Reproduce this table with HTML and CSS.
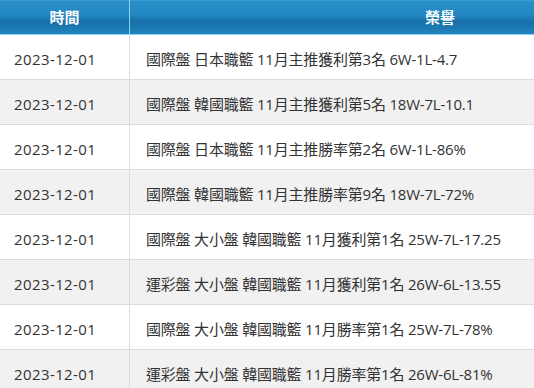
FILE: index.html
```html
<!DOCTYPE html>
<html lang="zh-Hant">
<head>
<meta charset="utf-8">
<link rel="stylesheet" href="styles.css">
</head>
<body>
<div class="wrap">
<table class="honor">
<thead>
<tr><th class="c-date">時間</th><th class="c-honor">榮譽</th></tr>
</thead>
<tbody>
<tr><td class="c-date">2023-12-01</td><td class="c-honor">國際盤 日本職籃 11月主推獲利第3名 6W-1L-4.7</td></tr>
<tr><td class="c-date">2023-12-01</td><td class="c-honor">國際盤 韓國職籃 11月主推獲利第5名 18W-7L-10.1</td></tr>
<tr><td class="c-date">2023-12-01</td><td class="c-honor">國際盤 日本職籃 11月主推勝率第2名 6W-1L-86%</td></tr>
<tr><td class="c-date">2023-12-01</td><td class="c-honor">國際盤 韓國職籃 11月主推勝率第9名 18W-7L-72%</td></tr>
<tr><td class="c-date">2023-12-01</td><td class="c-honor">國際盤 大小盤 韓國職籃 11月獲利第1名 25W-7L-17.25</td></tr>
<tr><td class="c-date">2023-12-01</td><td class="c-honor">運彩盤 大小盤 韓國職籃 11月獲利第1名 26W-6L-13.55</td></tr>
<tr><td class="c-date">2023-12-01</td><td class="c-honor">國際盤 大小盤 韓國職籃 11月勝率第1名 25W-7L-78%</td></tr>
<tr><td class="c-date">2023-12-01</td><td class="c-honor">運彩盤 大小盤 韓國職籃 11月勝率第1名 26W-6L-81%</td></tr>
</tbody>
</table>
</div>
</body>
</html>
```
FILE: styles.css
```css
html, body {
  margin: 0;
  padding: 0;
  background: #fff;
  overflow: hidden;
}
.wrap {
  width: 534px;
  height: 388px;
  overflow: hidden;
}
.honor {
  width: 750px;
  border-collapse: collapse;
  table-layout: fixed;
  font-family: "Open Sans", "Noto Sans CJK TC", sans-serif;
  font-size: 15px;
  color: #333;
}
.honor th {
  height: 33px;
  padding: 1px 0 0 0;
  color: #fff;
  font-weight: bold;
  text-align: center;
  background: linear-gradient(to bottom, #4aa3d6 0px, #2b90c9 1px, #2288c3 14px, #176fa8 22px, #1a77b0 27px, #2384bd 34px);
  border-bottom: 1px solid #86d3f3;
  line-height: 33px;
}
.honor th.c-date {
  width: 129px;
  border-right: 1px solid #86d3f3;
}
.honor td {
  height: 40px;
  padding: 4px 0 0 15px;
  border-bottom: 1px solid #dcdcdc;
  white-space: nowrap;
  line-height: 20px;
}
.honor td.c-date {
  padding-left: 14px;
  letter-spacing: 0.4px;
  border-right: 1px solid #dcdcdc;
}
.honor td.c-honor {
  padding-left: 16px;
  letter-spacing: -0.2px;
}
.honor tbody tr:nth-child(even) td {
  background: #f1f1f1;
}
```
